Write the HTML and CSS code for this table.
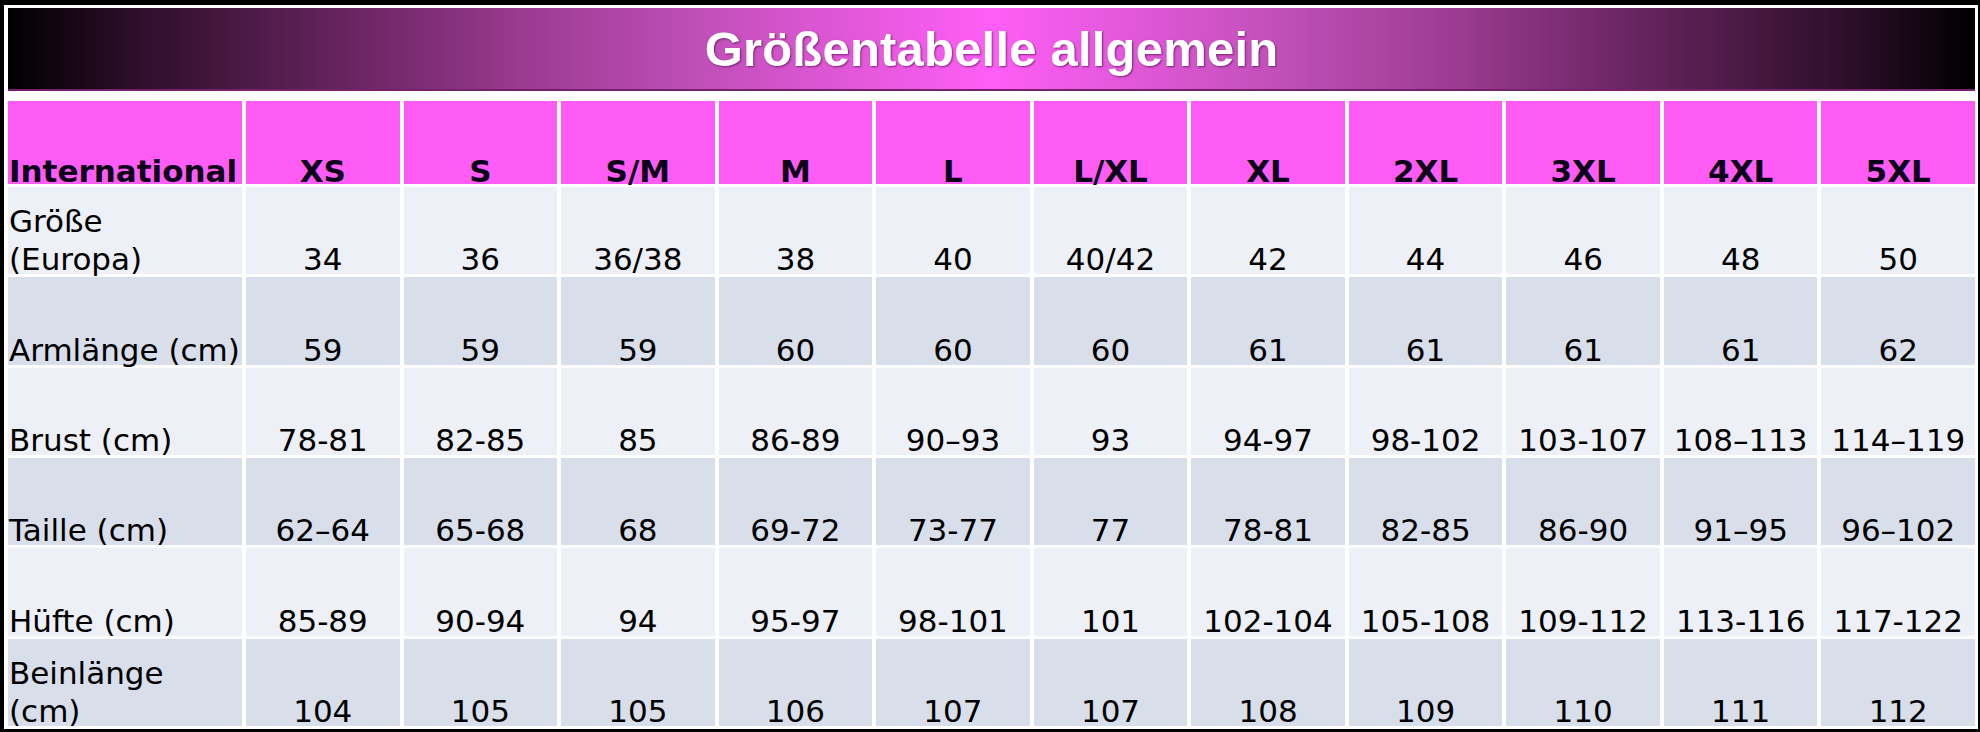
FILE: index.html
```html
<!DOCTYPE html>
<html lang="de">
<head>
<meta charset="utf-8">
<title>Größentabelle allgemein</title>
<link rel="stylesheet" href="styles.css">
</head>
<body>
<div class="frame">
  <div class="banner"><h1 class="title">Größentabelle allgemein</h1></div>
  <div class="chart" role="table">
    <div class="cell head label"><span>International</span></div>
    <div class="cell head"><span>XS</span></div>
    <div class="cell head"><span>S</span></div>
    <div class="cell head"><span>S/M</span></div>
    <div class="cell head"><span>M</span></div>
    <div class="cell head"><span>L</span></div>
    <div class="cell head"><span>L/XL</span></div>
    <div class="cell head"><span>XL</span></div>
    <div class="cell head"><span>2XL</span></div>
    <div class="cell head"><span>3XL</span></div>
    <div class="cell head"><span>4XL</span></div>
    <div class="cell head"><span>5XL</span></div>

    <div class="cell odd label"><span>Größe<br>(Europa)</span></div>
    <div class="cell odd"><span>34</span></div>
    <div class="cell odd"><span>36</span></div>
    <div class="cell odd"><span>36/38</span></div>
    <div class="cell odd"><span>38</span></div>
    <div class="cell odd"><span>40</span></div>
    <div class="cell odd"><span>40/42</span></div>
    <div class="cell odd"><span>42</span></div>
    <div class="cell odd"><span>44</span></div>
    <div class="cell odd"><span>46</span></div>
    <div class="cell odd"><span>48</span></div>
    <div class="cell odd"><span>50</span></div>

    <div class="cell even label"><span>Armlänge (cm)</span></div>
    <div class="cell even"><span>59</span></div>
    <div class="cell even"><span>59</span></div>
    <div class="cell even"><span>59</span></div>
    <div class="cell even"><span>60</span></div>
    <div class="cell even"><span>60</span></div>
    <div class="cell even"><span>60</span></div>
    <div class="cell even"><span>61</span></div>
    <div class="cell even"><span>61</span></div>
    <div class="cell even"><span>61</span></div>
    <div class="cell even"><span>61</span></div>
    <div class="cell even"><span>62</span></div>

    <div class="cell odd label"><span>Brust (cm)</span></div>
    <div class="cell odd"><span>78-81</span></div>
    <div class="cell odd"><span>82-85</span></div>
    <div class="cell odd"><span>85</span></div>
    <div class="cell odd"><span>86-89</span></div>
    <div class="cell odd"><span>90–93</span></div>
    <div class="cell odd"><span>93</span></div>
    <div class="cell odd"><span>94-97</span></div>
    <div class="cell odd"><span>98-102</span></div>
    <div class="cell odd"><span>103-107</span></div>
    <div class="cell odd"><span>108–113</span></div>
    <div class="cell odd"><span>114–119</span></div>

    <div class="cell even label"><span>Taille (cm)</span></div>
    <div class="cell even"><span>62–64</span></div>
    <div class="cell even"><span>65-68</span></div>
    <div class="cell even"><span>68</span></div>
    <div class="cell even"><span>69-72</span></div>
    <div class="cell even"><span>73-77</span></div>
    <div class="cell even"><span>77</span></div>
    <div class="cell even"><span>78-81</span></div>
    <div class="cell even"><span>82-85</span></div>
    <div class="cell even"><span>86-90</span></div>
    <div class="cell even"><span>91–95</span></div>
    <div class="cell even"><span>96–102</span></div>

    <div class="cell odd label"><span>Hüfte (cm)</span></div>
    <div class="cell odd"><span>85-89</span></div>
    <div class="cell odd"><span>90-94</span></div>
    <div class="cell odd"><span>94</span></div>
    <div class="cell odd"><span>95-97</span></div>
    <div class="cell odd"><span>98-101</span></div>
    <div class="cell odd"><span>101</span></div>
    <div class="cell odd"><span>102-104</span></div>
    <div class="cell odd"><span>105-108</span></div>
    <div class="cell odd"><span>109-112</span></div>
    <div class="cell odd"><span>113-116</span></div>
    <div class="cell odd"><span>117-122</span></div>

    <div class="cell even label"><span>Beinlänge<br>(cm)</span></div>
    <div class="cell even"><span>104</span></div>
    <div class="cell even"><span>105</span></div>
    <div class="cell even"><span>105</span></div>
    <div class="cell even"><span>106</span></div>
    <div class="cell even"><span>107</span></div>
    <div class="cell even"><span>107</span></div>
    <div class="cell even"><span>108</span></div>
    <div class="cell even"><span>109</span></div>
    <div class="cell even"><span>110</span></div>
    <div class="cell even"><span>111</span></div>
    <div class="cell even"><span>112</span></div>
  </div>
</div>
</body>
</html>
```
FILE: styles.css
```css
html, body {
  margin: 0;
  padding: 0;
  background: #000;
  height: 100%;
  overflow: hidden;
}

.frame {
  margin: 5px 2px 0 4px;
  padding: 3px 3px 0 4px;
  background: #fff;
  height: 724px;
  box-sizing: border-box;
  display: flex;
  flex-direction: column;
  gap: 10px;
}

.banner {
  height: 83px;
  flex: none;
  display: flex;
  align-items: center;
  justify-content: center;
  background: linear-gradient(to right, #000 0%, #2a0d27 6%, #66245e 17%, #9a3a90 26%, #bf4fb7 35%, #e258da 43%, #ff5ef6 50%, #e258da 57%, #bf4fb7 65%, #9a3a90 74%, #66245e 83%, #2a0d27 94%, #000 100%);
  border-bottom: 2px solid #74206a;
  box-sizing: border-box;
}

.title {
  margin: 0;
  padding-top: 2px;
  font-family: "Liberation Sans", Arial, sans-serif;
  font-weight: bold;
  font-size: 49px;
  line-height: 1;
  color: #fff;
  letter-spacing: 0.2px;
  text-shadow: 1px 1px 2px rgba(60, 0, 50, 0.6);
}

.chart {
  flex: none;
  height: 625px;
  display: grid;
  grid-template-columns: 234px repeat(11, 1fr);
  grid-template-rows: 83px repeat(6, 1fr);
  column-gap: 4px;
  row-gap: 3px;
}

.cell {
  display: flex;
  align-items: flex-end;
  justify-content: center;
  font-family: "DejaVu Sans", Verdana, sans-serif;
  font-size: 31px;
  color: #000;
  line-height: 38px;
}

.cell span {
  display: block;
  margin-bottom: -4px;
  white-space: nowrap;
}

.cell.label {
  justify-content: flex-start;
  padding-left: 1px;
}

.head {
  background: #ff5cf6;
  font-weight: bold;
  color: #0a0018;
}

.head span {
  margin-bottom: -6px;
}

.odd {
  background: #eef0f7;
}

.even {
  background: #d8deea;
}
```
